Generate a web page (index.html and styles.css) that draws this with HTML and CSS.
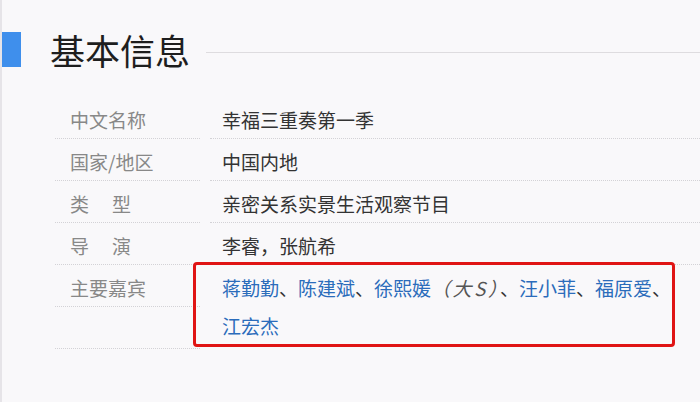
FILE: index.html
```html
<!DOCTYPE html>
<html lang="zh-CN">
<head>
<meta charset="utf-8">
<link rel="stylesheet" href="styles.css">
</head>
<body>
<div class="page">
  <div class="head">
    <div class="bar"></div>
    <h2 class="title">基本信息</h2>
    <div class="rule"></div>
  </div>
  <div class="info">
    <div class="name">中文名称</div>
    <div class="value">幸福三重奏第一季</div>
    <div class="name">国家/地区</div>
    <div class="value">中国内地</div>
    <div class="name">类<span class="gap"></span>型</div>
    <div class="value">亲密关系实景生活观察节目</div>
    <div class="name">导<span class="gap"></span>演</div>
    <div class="value">李睿，张航希</div>
    <div class="name">主要嘉宾</div>
    <div class="value multi">
      <span class="link">蒋勤勤</span>、<span class="link">陈建斌</span>、<span class="link">徐熙媛</span><span class="note">（大S）</span>、<span class="link">汪小菲</span>、<span class="link">福原爱</span>、<br><span class="link">江宏杰</span>
      <div class="mark"></div>
    </div>
    <div class="name empty"></div>
  </div>
</div>
</body>
</html>
```

FILE: styles.css
```css
html, body {
  margin: 0;
  padding: 0;
  background: #f9f8fa;
}
body {
  width: 700px;
  height: 402px;
  overflow: hidden;
  font-family: "Noto Sans CJK SC", "Noto Sans", sans-serif;
}
.page {
  height: 402px;
  border-left: 2px solid #e6e4e8;
  box-sizing: border-box;
}
.head {
  display: flex;
  padding-top: 32px;
}
.bar {
  width: 19px;
  height: 35px;
  background: #3f8fec;
}
.title {
  margin: 0 0 0 29px;
  font-size: 35px;
  line-height: 35px;
  font-weight: normal;
  color: #1e1e1e;
}
.rule {
  flex: 1;
  height: 1px;
  margin: 20px 0 0 16px;
  background: #dedcdf;
}
.info {
  display: grid;
  grid-template-columns: 145px 1fr;
  column-gap: 10px;
  margin: 30px 0 0 53px;
}
.name, .value {
  padding-top: 4px;
  height: 37px;
  line-height: 38px;
  font-size: 19px;
  border-bottom: 1px dotted #d3d2d6;
  white-space: nowrap;
}
.name {
  padding-left: 15px;
  color: #888;
}
.value {
  padding-left: 12px;
  color: #333;
}
.gap {
  display: inline-block;
  width: 23px;
}
.multi {
  grid-row: span 2;
  height: auto;
  border-bottom: none;
  position: relative;
}
.link {
  color: #2b6cbb;
}
.note {
  color: #555;
  font-style: italic;
  letter-spacing: 2.5px;
}
.mark {
  position: absolute;
  left: -17px;
  top: -3px;
  width: 476px;
  height: 79px;
  border: 3px solid #e01414;
  border-radius: 4px;
}
```
